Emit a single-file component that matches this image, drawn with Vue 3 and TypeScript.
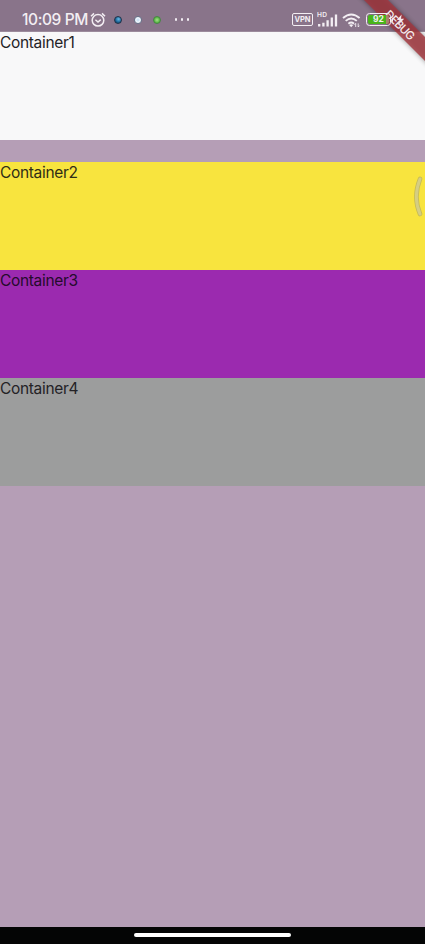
<script setup lang="ts">
interface Block {
  label: string
  kind: string
}

const blocks: Block[] = [
  { label: 'Container1', kind: 'white' },
  { label: 'Container2', kind: 'yellow' },
  { label: 'Container3', kind: 'purple' },
  { label: 'Container4', kind: 'grey' },
]
</script>

<template>
  <div class="screen">
    <header class="status">
      <span class="time">10:09 PM</span>
      <svg class="alarm" width="16" height="16" viewBox="0 0 16 16">
        <circle cx="8" cy="8.3" r="5.8" />
        <path d="M1 4.2 4 1.4M15 4.2 12 1.4M5.4 7.8 8 10l2.8-2.4" />
      </svg>
      <span class="dots">
        <i class="dot blue"></i>
        <i class="dot pale"></i>
        <i class="dot green"></i>
      </span>
      <span class="more"><i></i><i></i><i></i></span>
      <span class="right">
        <span class="vpn">VPN</span>
        <svg class="signal" width="21" height="16" viewBox="0 0 21 16">
          <text x="0" y="6.4" textLength="10">HD</text>
          <path d="M2.2 13v2.5M6.4 11.7v3.8M10.6 9.3v6.2M14.8 6.5v9M19 3.5v12" />
        </svg>
        <svg class="wifi" width="19" height="16" viewBox="0 0 19 16">
          <path d="M1 6Q9.2-1.2 17.6 6M3.7 8.9q5.5-4.8 11.1 0M6.4 11.7q2.8-2.3 5.6 0" />
          <path class="tip" d="M7.2 12.9q2-1.5 4 0l-2 2.3z" />
          <path class="arrows" d="M13.7 15v-3.6l-1.2 1.3M16.2 11.4V15l1.2-1.3" />
        </svg>
        <span class="battery"><b>92</b></span>
        <i class="nub"></i>
      </span>
    </header>

    <main class="body">
      <section v-for="block in blocks" :key="block.label" class="block" :class="block.kind">
        {{ block.label }}
      </section>
    </main>

    <footer class="nav"><span class="handle"></span></footer>

    <svg class="banner" width="75" height="75" viewBox="0 0 75 75">
      <defs>
        <filter id="soft" x="-20%" y="-20%" width="140%" height="140%">
          <feGaussianBlur stdDeviation="2.6" />
        </filter>
      </defs>
      <path class="shade" d="M4-10H28L85 47V71Z" filter="url(#soft)" />
      <path class="ribbon" d="M14 0H38L75 37V61Z" />
      <path class="bolt" d="m51.6 14.6-4.8 5.4h3.2l-1.8 5 6-6.2h-3.2z" />
      <text x="0" y="4.2" text-anchor="middle" textLength="37" transform="translate(50 25) rotate(45)">DEBUG</text>
    </svg>

    <svg class="edge" width="11" height="42" viewBox="0 0 11 42">
      <path class="rim" d="M7 3Q-.2 21 7 38" />
      <path class="core" d="M7 3Q-.2 21 7 38" />
    </svg>
  </div>
</template>

<style>
body {
  margin: 0;
}
</style>

<style scoped>
.screen {
  position: relative;
  display: flex;
  flex-direction: column;
  width: 425px;
  height: 944px;
  overflow: hidden;
  background: #b59eb6;
  font-family: Inter, "Liberation Sans", sans-serif;
}

.status {
  display: flex;
  align-items: center;
  box-sizing: border-box;
  height: 32px;
  padding: 8px 22px 0;
  border-bottom: 1px solid #9c8b9c;
  background: #89748a;
  color: #f3eef3;
}

.time {
  width: 67px;
  font-size: 15.5px;
  font-weight: 500;
  letter-spacing: -0.4px;
  white-space: nowrap;
}

.alarm {
  margin-left: 1px;
  fill: none;
  stroke: #f3eef3;
  stroke-width: 1.5;
}

.dots {
  display: flex;
  gap: 11.5px;
  margin-left: 8px;
}

.dot {
  box-sizing: border-box;
  width: 8px;
  height: 8px;
  border-radius: 50%;
}

.blue {
  border: 1px solid #203248;
  background: radial-gradient(circle at 60% 35%, #68b9e5, #176193 60%, #183650);
}

.pale {
  border: 1px solid #66748c;
  background: radial-gradient(circle, #bfdcf4, #f7faff 60%);
}

.green {
  border: 1px solid #468643;
  background: radial-gradient(circle, #a4df89, #54b440 70%);
}

.more {
  display: flex;
  gap: 3.6px;
  margin-left: 14px;
}

.more i {
  width: 2.4px;
  height: 2.4px;
  border-radius: 50%;
  background: #f3eef3;
}

.right {
  position: relative;
  z-index: 2;
  display: flex;
  align-items: center;
  margin-left: auto;
  margin-right: 10px;
}

.vpn {
  box-sizing: border-box;
  width: 21px;
  height: 13px;
  border: 1.5px solid #f3eef3;
  border-radius: 2px;
  font-size: 7.5px;
  font-weight: 700;
  line-height: 11px;
  text-align: center;
}

.signal {
  margin: -2px 0 0 4px;
  fill: none;
  stroke: #f3eef3;
  stroke-width: 2.3;
}

.signal text {
  fill: #f3eef3;
  stroke: none;
  font-size: 6.6px;
  font-weight: 600;
}

.wifi {
  margin-left: 4px;
  fill: none;
  stroke: #f3eef3;
  stroke-width: 1.9;
}

.wifi .tip {
  fill: #f3eef3;
  stroke: none;
}

.wifi .arrows {
  stroke-width: 0.9;
}

.battery {
  box-sizing: border-box;
  width: 25px;
  height: 13px;
  margin-left: 5px;
  padding: 1px;
  border: 1px solid #f3eef3;
  border-radius: 3.5px;
}

.battery b {
  display: block;
  height: 9px;
  border-radius: 2px;
  background: linear-gradient(90deg, #49b51b 86%, #a9826b 86%);
  font-size: 8.5px;
  font-weight: 700;
  line-height: 9px;
  text-align: center;
}

.nub {
  width: 1.5px;
  height: 4px;
  margin-left: 0.5px;
  border-radius: 0 1px 1px 0;
  background: #f3eef3;
}

.body {
  flex: 1;
}

.block {
  box-sizing: border-box;
  height: 108px;
  font-size: 15.5px;
  letter-spacing: -0.33px;
  line-height: 22px;
  color: #242226;
}

.white {
  margin-bottom: 22px;
  background: #f8f8f9;
}

.yellow {
  background: #f8e43e;
  color: #302d16;
}

.purple {
  background: #9b2aaf;
  color: #250b2c;
}

.grey {
  background: #9c9d9d;
}

.nav {
  display: flex;
  justify-content: center;
  height: 17px;
  background: #040505;
}

.handle {
  width: 157px;
  height: 4px;
  margin-top: 6px;
  border-radius: 2px;
  background: #fff;
}

.banner {
  position: absolute;
  top: 0;
  right: 0;
  z-index: 1;
}

.shade {
  fill: #000;
  opacity: 0.4;
}

.ribbon {
  fill: #a5363d;
  opacity: 0.8;
}

.banner text {
  fill: #f3e9ec;
  font-size: 11.5px;
  font-weight: 500;
}

.bolt {
  fill: #f3e9ec;
}

.edge {
  position: absolute;
  top: 176px;
  right: 1px;
  fill: none;
  stroke-linecap: round;
}

.rim {
  stroke: #c4ba58;
  stroke-width: 4.6;
}

.core {
  stroke: #d5ce83;
  stroke-width: 3;
}
</style>
